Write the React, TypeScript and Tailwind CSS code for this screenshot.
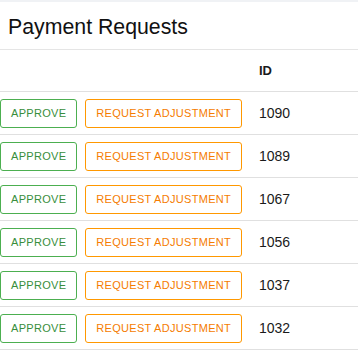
import React from "react";

const ids = [1090, 1089, 1067, 1056, 1037, 1032];

export default function App() {
  return (
    <div className="w-[358px] h-[354px] bg-white overflow-hidden" style={{ fontFamily: '"Liberation Sans", Arial, sans-serif' }}>
      <div className="h-[2px] bg-[#f0f2f5]" />
      <div className="h-[48px] flex items-center pl-[8px] pt-[4px] text-[21.3px] text-[#111] border-b border-[#e5e5e5]">
        Payment Requests
      </div>
      <div className="flex h-[42px] items-center border-b border-[#e0e0e0]">
        <div className="w-[259px]" />
        <div className="text-[13px] font-bold text-[#1a1a1a] pt-[1px]">ID</div>
      </div>
      {ids.map((id) => (
        <div key={id} className="flex h-[43px] items-center border-b border-[#e0e0e0]">
          <div className="w-[259px] flex items-center gap-[8px]">
            <button className="h-[29px] px-[10px] rounded-[3px] border border-[#4caf50] text-[#388e3c] text-[11px] tracking-[0.3px] leading-none uppercase">
              Approve
            </button>
            <button className="h-[29px] px-[10px] rounded-[3px] border border-[#ff9800] text-[#f57c00] text-[11px] tracking-[0.3px] leading-none uppercase">
              Request Adjustment
            </button>
          </div>
          <div className="text-[14px] text-[#1a1a1a]">{id}</div>
        </div>
      ))}
    </div>
  );
}
